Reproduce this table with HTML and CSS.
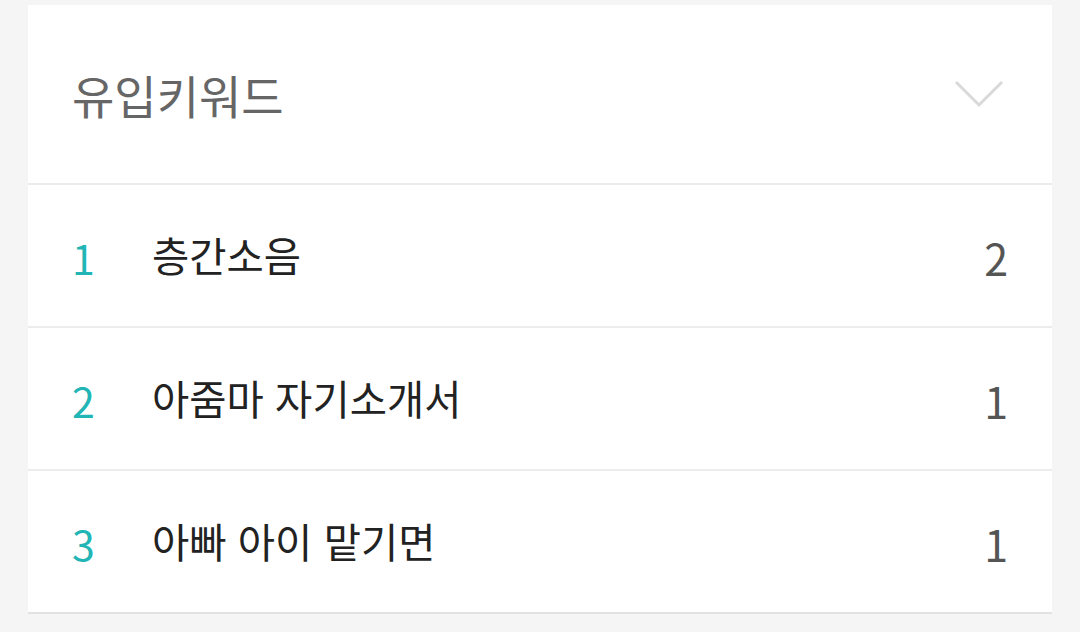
FILE: index.html
```html
<!DOCTYPE html>
<html lang="ko">
<head>
<meta charset="utf-8">
<link rel="stylesheet" href="styles.css">
</head>
<body>
<div class="page">
  <section class="card">
    <header class="card-head">
      <h2 class="title">유입키워드</h2>
      <svg class="chevron" width="52" height="30" viewBox="0 0 52 30"><polyline points="3,3 26,26 49,3" fill="none" stroke="#d9d9d9" stroke-width="3"/></svg>
    </header>
    <ul class="list">
      <li class="row"><span class="rank">1</span><span class="kw">층간소음</span><span class="cnt">2</span></li>
      <li class="row"><span class="rank">2</span><span class="kw">아줌마 자기소개서</span><span class="cnt">1</span></li>
      <li class="row"><span class="rank">3</span><span class="kw">아빠 아이 맡기면</span><span class="cnt">1</span></li>
    </ul>
  </section>
</div>
</body>
</html>
```
FILE: styles.css
```css
html, body { margin: 0; padding: 0; background: #f5f5f5; }
body { font-family: "Noto Sans CJK KR", "Noto Sans", sans-serif; width: 1080px; height: 632px; overflow: hidden; }
.page { padding: 5px 28px 0; }
.card { background: #fff; border-bottom: 2px solid #e2e2e2; }
.card-head { height: 178px; display: flex; align-items: center; justify-content: space-between; padding: 0 47px 0 44px; border-bottom: 2px solid #ececec; }
.title { margin: 0; font-size: 46px; font-weight: 400; color: #666; line-height: 1; }
.chevron { display: block; }
.list { list-style: none; margin: 0; padding: 0; }
.row { height: 141px; display: flex; align-items: center; padding: 0 44px; border-bottom: 2px solid #ececec; }
.row:last-child { border-bottom: none; }
.rank { width: 80px; font-size: 41px; color: #22b5b5; line-height: 1; padding-top: 4px; }
.kw { flex: 1; font-size: 40.5px; color: #222; line-height: 1; }
.cnt { font-size: 43px; color: #555; line-height: 1; padding-top: 4px; }
```
